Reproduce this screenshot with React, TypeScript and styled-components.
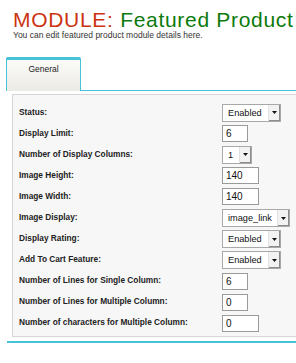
import React from "react";
import styled, { createGlobalStyle } from "styled-components";

const GlobalStyle = createGlobalStyle`
  html, body { margin: 0; padding: 0; background: #fff; overflow: hidden; }
  body { font-family: "Liberation Sans", Arial, sans-serif; }
`;

const CYAN = "#48c2d9";

const Page = styled.div`
  width: 330px;
  padding-left: 6px;
  box-sizing: border-box;
`;

const Header = styled.div`
  padding-left: 7px;
  padding-top: 9px;
`;

const Title = styled.h1`
  margin: 0;
  font-size: 21px;
  line-height: 22px;
  font-weight: normal;
  letter-spacing: 0.7px;
  white-space: nowrap;
`;

const Accent = styled.span<{ $color: string }>`
  color: ${(p) => p.$color};
`;

const Sub = styled.p`
  margin: 0 0 17px;
  font-size: 8.5px;
  line-height: 9px;
  color: #333;
  white-space: nowrap;
`;

const TabBar = styled.div`
  display: flex;
  height: 34px;
`;

const Tab = styled.div`
  width: 75px;
  box-sizing: border-box;
  border: 1px solid ${CYAN};
  border-top: 3px solid ${CYAN};
  border-bottom: none;
  border-radius: 2px 2px 0 0;
  background: linear-gradient(#fbfbf9, #ebeae4);
  text-align: center;
  font-size: 8.5px;
  color: #222;
  padding-top: 4px;
`;

const TabFill = styled.div`
  flex: 1;
  border-bottom: 1px solid ${CYAN};
`;

const Content = styled.div`
  margin-left: 1px;
  padding: 3px 0 4px 5px;
  border-bottom: 2px solid ${CYAN};
`;

const Panel = styled.div`
  background: #f7f7f7;
  border: 1px solid #d6d6d6;
  padding: 6px 0 3px 6px;
`;

const Row = styled.div`
  display: grid;
  grid-template-columns: 203px auto;
  align-items: center;
  height: 21.1px;
`;

const Label = styled.span`
  font-weight: bold;
  font-size: 8.3px;
  color: #222;
  white-space: nowrap;
`;

const TextInput = styled.input<{ $w: number }>`
  width: ${(p) => p.$w}px;
  height: 17px;
  box-sizing: border-box;
  border: 1px solid #9a9a9a;
  background: #fff;
  font-family: "Liberation Sans", Arial, sans-serif;
  font-size: 10px;
  color: #111;
  padding: 0 3px;
  margin: 0;
  outline: none;
`;

const SelectBox = styled.div<{ $w: number }>`
  display: inline-flex;
  width: ${(p) => p.$w}px;
  height: 18px;
  box-sizing: border-box;
  border: 1px solid #a8a8a8;
  background: #fff;
`;

const NativeSelect = styled.select`
  appearance: none;
  -webkit-appearance: none;
  border: none;
  background: transparent;
  flex: 1;
  min-width: 0;
  margin: 0;
  padding: 0 0 0 5px;
  font-family: "Liberation Sans", Arial, sans-serif;
  font-size: 9.2px;
  color: #111;
  outline: none;
`;

const ArrowBtn = styled.span`
  width: 11px;
  display: flex;
  align-items: center;
  justify-content: center;
  background: #f2f2f2;
  border-left: 1px solid #e2e2e2;
  box-shadow: inset -1px -1px 0 #8c8c8c;
`;

const Arrow = () => (
  <svg width="5" height="3" viewBox="0 0 5 3">
    <path d="M0 0H5L2.5 3Z" fill="#111" />
  </svg>
);

type Field =
  | { label: string; kind: "input"; value: string; w: number }
  | { label: string; kind: "select"; value: string; w: number; options: string[] };

const fields: Field[] = [
  { label: "Status:", kind: "select", value: "Enabled", w: 59, options: ["Enabled", "Disabled"] },
  { label: "Display Limit:", kind: "input", value: "6", w: 26 },
  { label: "Number of Display Columns:", kind: "select", value: "1", w: 30, options: ["1", "2", "3", "4"] },
  { label: "Image Height:", kind: "input", value: "140", w: 37 },
  { label: "Image Width:", kind: "input", value: "140", w: 37 },
  { label: "Image Display:", kind: "select", value: "image_link", w: 68, options: ["image_link", "image"] },
  { label: "Display Rating:", kind: "select", value: "Enabled", w: 59, options: ["Enabled", "Disabled"] },
  { label: "Add To Cart Feature:", kind: "select", value: "Enabled", w: 59, options: ["Enabled", "Disabled"] },
  { label: "Number of Lines for Single Column:", kind: "input", value: "6", w: 26 },
  { label: "Number of Lines for Multiple Column:", kind: "input", value: "0", w: 26 },
  { label: "Number of characters for Multiple Column:", kind: "input", value: "0", w: 37 },
];

export default function App() {
  return (
    <Page>
      <GlobalStyle />
      <Header>
        <Title>
          <Accent $color="#cc3311">MODULE:</Accent>{" "}
          <Accent $color="#0c7a0c">Featured Product</Accent>
        </Title>
        <Sub>You can edit featured product module details here.</Sub>
      </Header>
      <TabBar>
        <Tab>General</Tab>
        <TabFill />
      </TabBar>
      <Content>
        <Panel>
          {fields.map((f) => (
            <Row key={f.label}>
              <Label>{f.label}</Label>
              <div>
                {f.kind === "input" ? (
                  <TextInput $w={f.w} defaultValue={f.value} />
                ) : (
                  <SelectBox $w={f.w}>
                    <NativeSelect defaultValue={f.value}>
                      {f.options.map((o) => (
                        <option key={o}>{o}</option>
                      ))}
                    </NativeSelect>
                    <ArrowBtn>
                      <Arrow />
                    </ArrowBtn>
                  </SelectBox>
                )}
              </div>
            </Row>
          ))}
        </Panel>
      </Content>
    </Page>
  );
}
